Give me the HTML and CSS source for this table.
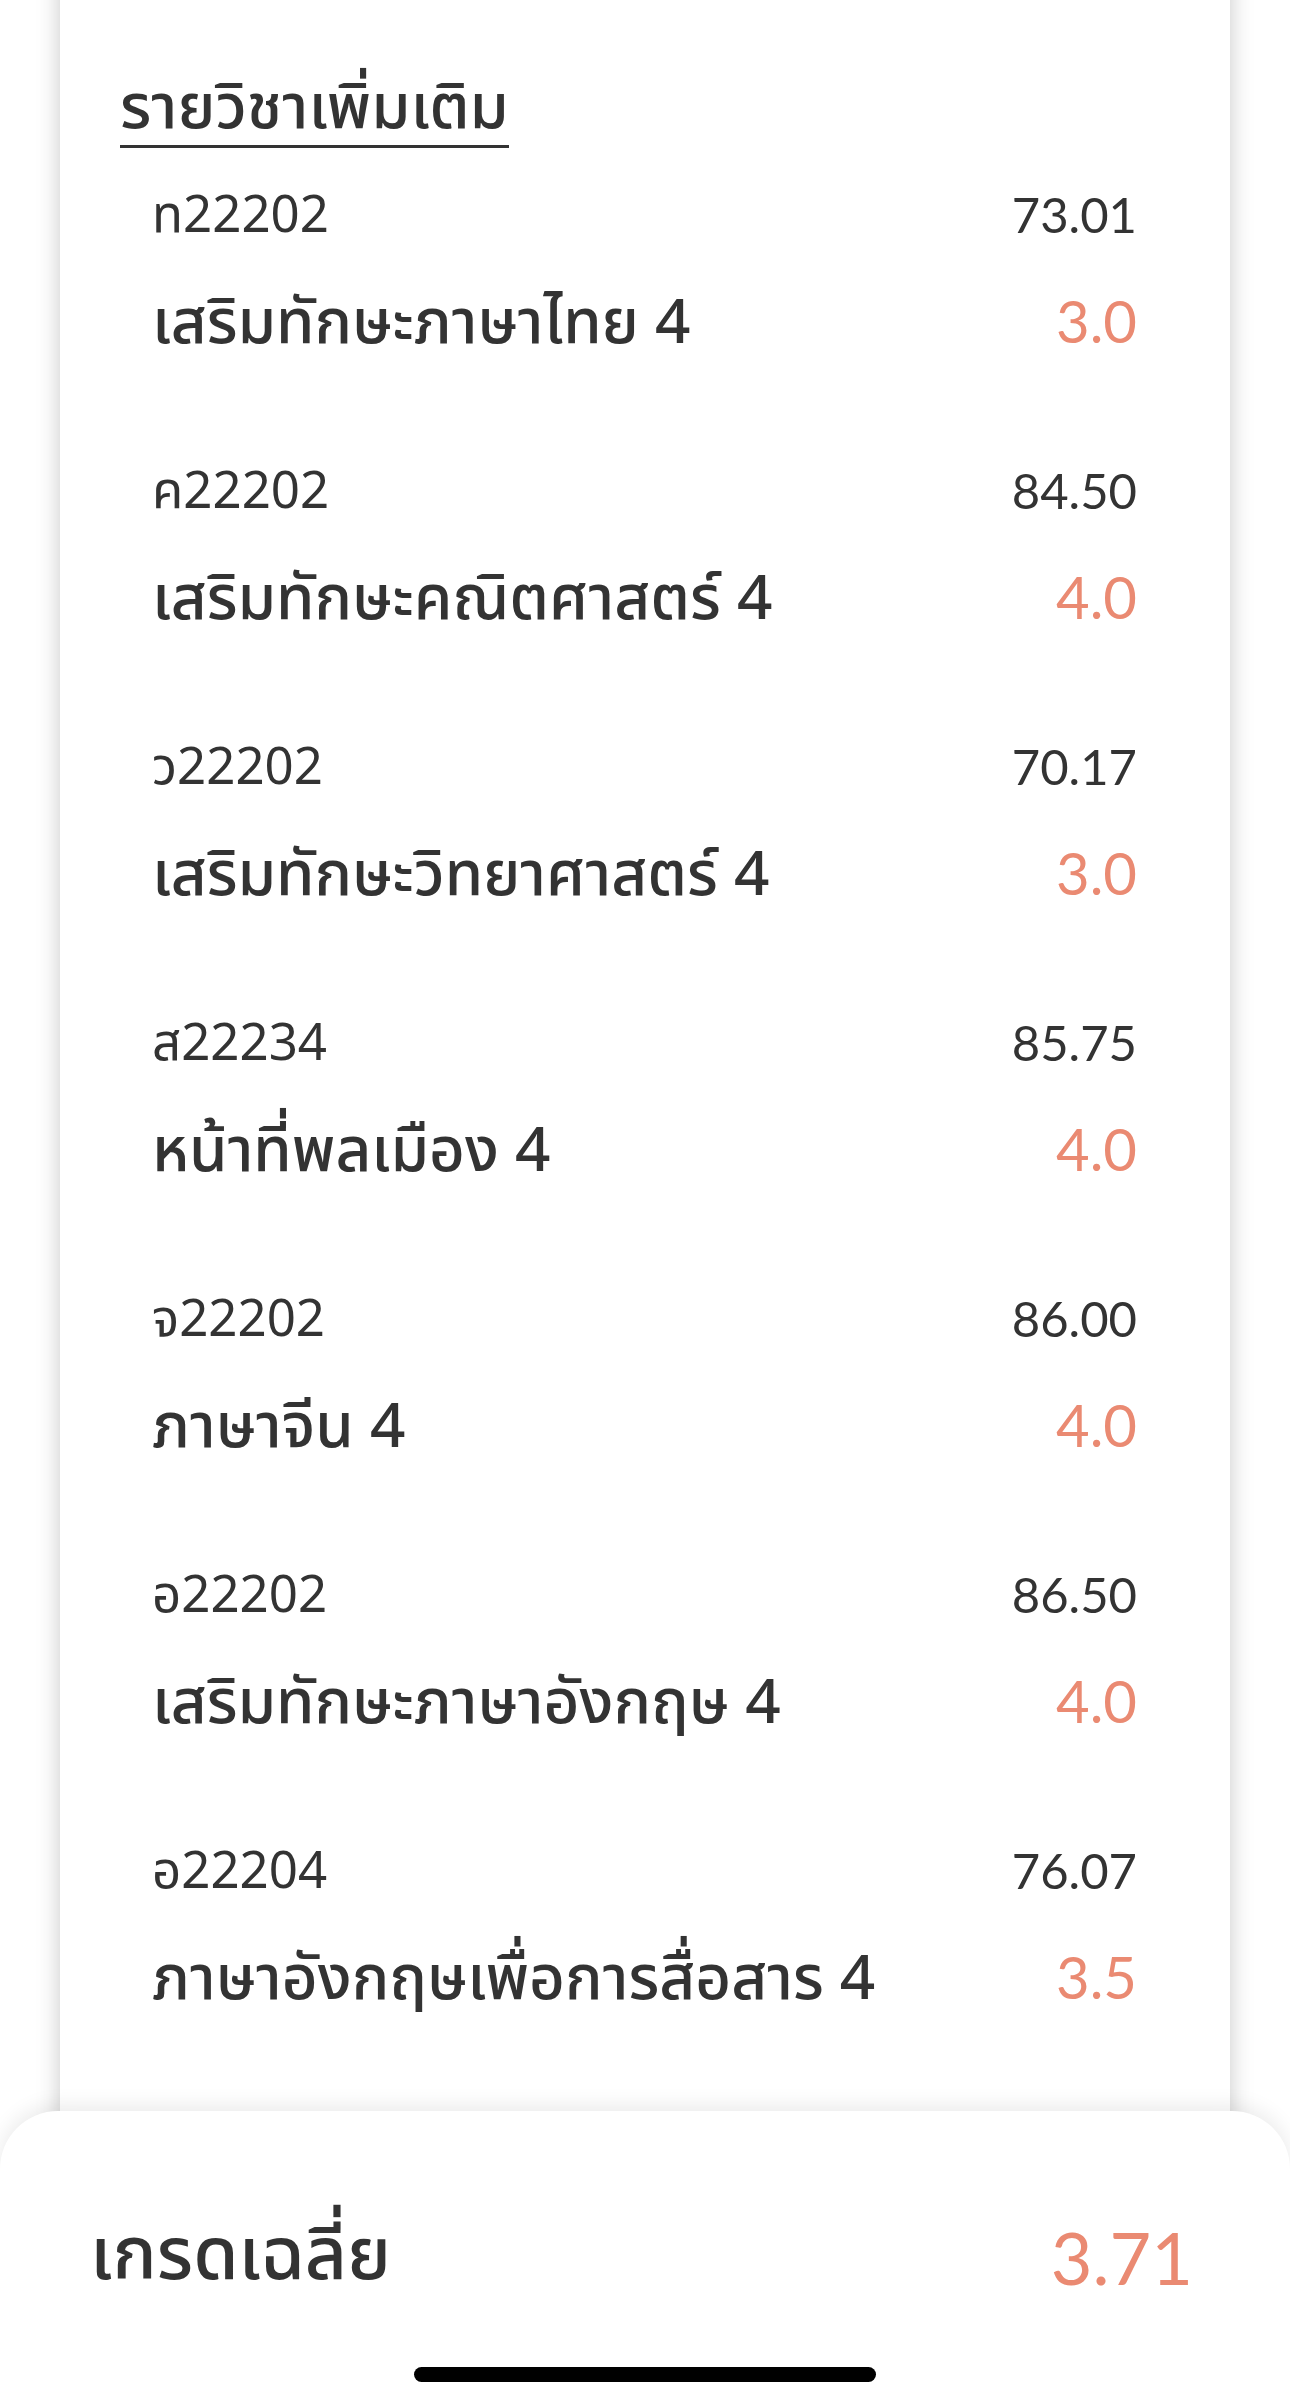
FILE: index.html
```html
<!DOCTYPE html>
<html lang="th">
<head>
  <meta charset="UTF-8" />
  <meta name="viewport" content="width=device-width, initial-scale=1.0"/>
  <title>รายวิชาเพิ่มเติม</title>
  <link rel="stylesheet" href="styles.css">
</head>
<body>
<div class="screen">
  <div class="card">
    <h2 class="section-title">รายวิชาเพิ่มเติม</h2>
    <div class="subject">
      <div class="line"><span class="code">ท22202</span><span class="score">73.01</span></div>
      <div class="line"><span class="name">เสริมทักษะภาษาไทย 4</span><span class="grade">3.0</span></div>
    </div>
    <div class="subject">
      <div class="line"><span class="code">ค22202</span><span class="score">84.50</span></div>
      <div class="line"><span class="name">เสริมทักษะคณิตศาสตร์ 4</span><span class="grade">4.0</span></div>
    </div>
    <div class="subject">
      <div class="line"><span class="code">ว22202</span><span class="score">70.17</span></div>
      <div class="line"><span class="name">เสริมทักษะวิทยาศาสตร์ 4</span><span class="grade">3.0</span></div>
    </div>
    <div class="subject">
      <div class="line"><span class="code">ส22234</span><span class="score">85.75</span></div>
      <div class="line"><span class="name">หน้าที่พลเมือง 4</span><span class="grade">4.0</span></div>
    </div>
    <div class="subject">
      <div class="line"><span class="code">จ22202</span><span class="score">86.00</span></div>
      <div class="line"><span class="name">ภาษาจีน 4</span><span class="grade">4.0</span></div>
    </div>
    <div class="subject">
      <div class="line"><span class="code">อ22202</span><span class="score">86.50</span></div>
      <div class="line"><span class="name">เสริมทักษะภาษาอังกฤษ 4</span><span class="grade">4.0</span></div>
    </div>
    <div class="subject">
      <div class="line"><span class="code">อ22204</span><span class="score">76.07</span></div>
      <div class="line"><span class="name">ภาษาอังกฤษเพื่อการสื่อสาร 4</span><span class="grade">3.5</span></div>
    </div>
  </div>

  <div class="summary">
    <div class="summary-row">
      <span class="summary-label">เกรดเฉลี่ย</span>
      <span class="summary-value">3.71</span>
    </div>
    <div class="home-bar"></div>
  </div>
</div>
</body>
</html>
```

FILE: styles.css
```css
:root {
  --text: #333333;
  --accent: #EA8A72;
}
html, body {
  margin: 0;
  padding: 0;
  background: #ffffff;
}
body {
  font-family: "Noto Sans Thai", "Noto Sans", Lato, sans-serif;
  color: var(--text);
}
.screen {
  position: relative;
  width: 1290px;
  height: 2406px;
  overflow: hidden;
}
.card {
  margin: -40px 60px 0;
  padding: 113px 93px 0 92px;
  height: 2400px;
  background: #ffffff;
  box-shadow: 0 0 22px rgba(0, 0, 0, 0.22);
}
.section-title {
  display: inline-block;
  margin: 0 0 37px -32px;
  font-size: 63px;
  font-weight: 500;
  line-height: 72px;
  border-bottom: 3px solid var(--text);
}
.subject {
  margin-bottom: 94px;
}
.line {
  display: flex;
  justify-content: space-between;
  align-items: center;
}
.line + .line {
  margin-top: 32px;
}
.code {
  font-size: 51px;
  line-height: 64px;
}
.score {
  margin-bottom: 6px;
  font-family: Lato, sans-serif;
  font-size: 49px;
  line-height: 58px;
}
.name {
  font-size: 62px;
  font-weight: 500;
  line-height: 86px;
}
.grade {
  margin-bottom: 6px;
  font-family: Lato, sans-serif;
  font-size: 58px;
  line-height: 80px;
  color: var(--accent);
}
.summary {
  position: absolute;
  left: 0;
  right: 0;
  top: 2111px;
  bottom: 0;
  background: #ffffff;
  border-radius: 58px 58px 0 0;
  box-shadow: 0 -6px 20px rgba(0, 0, 0, 0.08);
}
.summary-row {
  display: flex;
  justify-content: space-between;
  align-items: center;
  padding: 96px 97px 0 90px;
}
.summary-label {
  font-size: 73px;
  font-weight: 500;
  line-height: 100px;
}
.summary-value {
  font-family: Lato, sans-serif;
  font-size: 72px;
  line-height: 100px;
  color: var(--accent);
}
.home-bar {
  position: absolute;
  left: 414px;
  bottom: 24px;
  width: 462px;
  height: 15px;
  border-radius: 8px;
  background: #000000;
}
```
